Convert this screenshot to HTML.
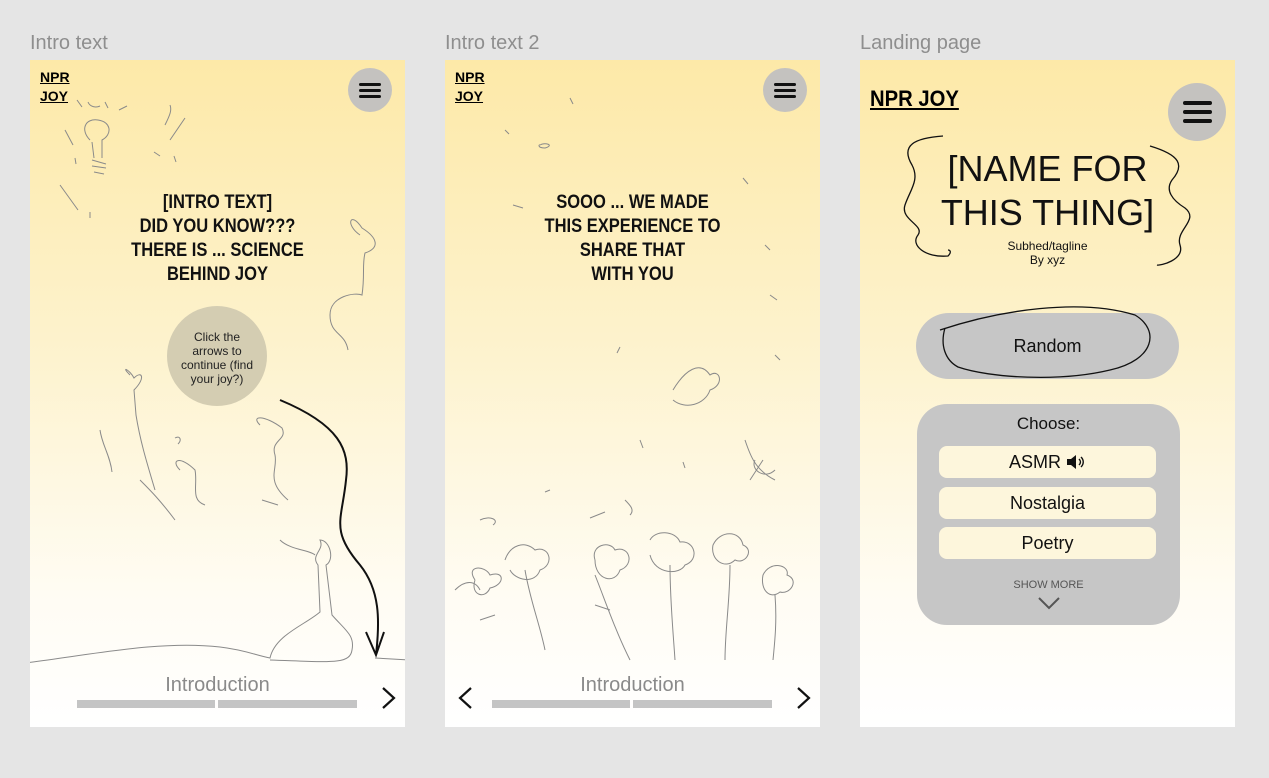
<!DOCTYPE html>
<html><head><meta charset="utf-8"><style>
*{margin:0;padding:0;box-sizing:border-box}
body{width:1269px;height:778px;background:#e5e5e5;position:relative;overflow:hidden;font-family:"Liberation Sans",sans-serif}
.lbl{position:absolute;top:32px;font-size:20px;color:#8e8e8e}
.fr{position:absolute;top:60px;width:375px;height:667px;background:linear-gradient(#fde9a8 0%,#fdf3cf 45%,#fffcf3 80%,#fff 100%);overflow:hidden}
.a{position:absolute}
.nar{font-family:"Liberation Sans Narrow","Liberation Sans",sans-serif;font-weight:bold}
.menu{position:absolute;border-radius:50%;background:#c4c2bf}
.menu i{position:absolute;left:25%;width:50%;background:#111;border-radius:2px}
.ct{position:absolute;text-align:center;width:100%;font-size:19px;line-height:24px;color:#111;transform:scaleX(.87);transform-origin:center}
.intro{position:absolute;top:614px;width:100%;text-align:center;font-size:20px;color:#8a8a8a}
.bar{position:absolute;top:640px;height:8px;background:#c4c4c4}
.btn{position:absolute;left:79px;width:217px;height:32px;background:#fdf6dc;border-radius:8px;text-align:center;font-size:18px;line-height:32px;color:#111}
</style></head><body>
<div class="lbl" style="left:30px">Intro text</div>
<div class="lbl" style="left:445px">Intro text 2</div>
<div class="lbl" style="left:860px">Landing page</div>

<!-- Frame 1 -->
<div class="fr" style="left:30px">
 <div class="a nar" style="left:10px;top:8px;font-size:14px;line-height:19px;text-decoration:underline">NPR<br>JOY</div>
 <div class="menu" style="left:318px;top:8px;width:44px;height:44px"><i style="top:15px;height:3px"></i><i style="top:21px;height:3px"></i><i style="top:27px;height:3px"></i></div>
 <svg class="a" style="left:0;top:0" width="375" height="667" fill="none" stroke="#8a8a8a" stroke-width="1">
  <path d="M60 80 C50 70 55 58 68 60 C82 62 82 75 72 80 L72 98 M62 82 L64 98 M62 100 L76 104 M62 106 L76 108 M64 112 L74 114"/>
  <path d="M47 40 L52 47 M58 42 C60 47 66 48 70 46 M75 42 L78 48 M89 50 L97 46 M135 65 C140 55 142 50 140 45 M140 80 L155 58 M124 92 L130 96 M144 96 L146 102 M35 70 L43 85 M45 98 L46 104 M30 125 L48 150 M60 152 L60 158"/>
  <path d="M330 175 C315 165 320 150 332 168 C348 178 350 188 335 193 C332 205 335 215 332 235 C325 232 300 236 300 255 C300 275 315 272 318 290"/>
  <path d="M100 315 C90 305 100 310 104 318 C112 310 116 318 104 330 L106 355 C110 380 116 400 125 430 M70 370 C72 385 80 395 82 412 M145 378 C150 375 152 380 148 384 M110 420 C120 430 130 440 145 460"/>
  <path d="M150 410 C140 400 150 395 165 410 C168 425 160 440 175 445 M230 365 C220 355 235 355 252 368 C258 380 240 380 245 395 C248 410 235 420 258 440 M232 440 L248 445 M250 480 C260 490 280 490 285 495"/>
  <path d="M-5 603 C60 595 130 580 190 587 C215 590 225 595 240 598 C245 575 275 565 290 552 L288 505 C280 495 295 490 290 480 C300 480 305 500 296 505 L302 555 C315 570 325 575 322 590 C320 605 300 602 240 600 M345 598 L380 600"/>
 </svg>
 <svg class="a" style="left:0;top:0" width="375" height="667" fill="none" stroke="#111" stroke-width="2">
  <path d="M250 340 C310 365 320 390 316 420 C312 460 300 470 330 505 C350 530 350 560 346 595 M336 572 L346 595 L354 572"/>
 </svg>
 <div class="ct nar" style="top:131px">[INTRO TEXT]<br>DID YOU KNOW???<br>THERE IS ... SCIENCE<br>BEHIND JOY</div>
 <div class="a" style="left:137px;top:246px;width:100px;height:100px;border-radius:50%;background:#d4cdb2;text-align:center;font-size:12px;line-height:14px;padding-top:24px;color:#222">Click the<br>arrows to<br>continue (find<br>your joy?)</div>
 <div class="intro">Introduction</div>
 <div class="bar" style="left:47px;width:138px"></div><div class="bar" style="left:188px;width:139px"></div>
 <svg class="a" style="left:350px;top:626px" width="18" height="24" fill="none" stroke="#111" stroke-width="2.2"><path d="M3 2 L14 12 L3 22"/></svg>
</div>

<!-- Frame 2 -->
<div class="fr" style="left:445px">
 <div class="a nar" style="left:10px;top:8px;font-size:14px;line-height:19px;text-decoration:underline">NPR<br>JOY</div>
 <div class="menu" style="left:318px;top:8px;width:44px;height:44px"><i style="top:15px;height:3px"></i><i style="top:21px;height:3px"></i><i style="top:27px;height:3px"></i></div>
 <svg class="a" style="left:0;top:0" width="375" height="667" fill="none" stroke="#8a8a8a" stroke-width="1">
  <path d="M125 38 L128 44 M60 70 L64 74 M95 85 C100 82 110 85 100 88 C92 88 94 84 95 85 M298 118 L303 124 M68 145 L78 148 M320 185 L325 190 M325 235 L332 240 M330 295 L335 300 M175 287 L172 293 M195 380 L198 388 M100 432 L105 430 M238 402 L240 408"/>
  <path d="M228 330 C240 310 255 300 265 315 C275 308 280 325 265 330 C260 345 240 350 228 340 M300 380 C305 395 310 410 330 420 M305 420 L318 400 M310 400 C305 410 320 420 330 410"/>
  <path d="M35 460 C45 455 55 460 48 465 M180 440 C185 445 190 450 185 455 M145 458 L160 452"/>
  <path d="M30 520 C20 505 40 505 45 515 C60 510 60 525 45 528 C40 540 25 535 30 520 M60 500 C65 485 80 480 90 490 C105 485 110 505 95 510 C90 525 70 520 65 510 M80 510 C85 540 95 565 100 590"/>
  <path d="M150 500 C145 485 165 480 170 490 C185 485 190 505 175 510 C170 525 150 520 150 500 M150 515 C160 540 170 570 185 600 M205 480 C210 470 230 470 235 482 C250 480 255 500 240 505 C235 515 210 515 205 495 M225 505 C225 540 228 570 230 600"/>
  <path d="M268 485 C275 470 295 470 298 485 C310 490 300 505 290 500 C280 510 265 500 268 485 M285 505 C285 540 280 570 280 600 M318 515 C325 500 345 505 342 515 C355 520 345 535 335 532 C325 540 315 530 318 515 M330 535 C332 560 330 580 328 600 M10 530 C20 520 30 520 35 530 M150 545 L165 550 M35 560 L50 555"/>
 </svg>
 <div class="ct nar" style="top:131px">SOOO ... WE MADE<br>THIS EXPERIENCE TO<br>SHARE THAT<br>WITH YOU</div>
 <div class="intro">Introduction</div>
 <div class="bar" style="left:47px;width:138px"></div><div class="bar" style="left:188px;width:139px"></div>
 <svg class="a" style="left:12px;top:626px" width="18" height="24" fill="none" stroke="#111" stroke-width="2.2"><path d="M14 2 L3 12 L14 22"/></svg>
 <svg class="a" style="left:350px;top:626px" width="18" height="24" fill="none" stroke="#111" stroke-width="2.2"><path d="M3 2 L14 12 L3 22"/></svg>
</div>

<!-- Frame 3 -->
<div class="fr" style="left:860px">
 <div class="a nar" style="left:10px;top:26px;font-size:22px;text-decoration:underline;transform:scaleX(.92);transform-origin:left">NPR JOY</div>
 <div class="menu" style="left:308px;top:23px;width:58px;height:58px"><i style="top:18px;height:4px"></i><i style="top:27px;height:4px"></i><i style="top:36px;height:4px"></i></div>
 <svg class="a" style="left:0;top:0" width="375" height="667" fill="none" stroke="#111" stroke-width="1.3">
  <path d="M83 76 C55 78 40 85 52 105 C60 120 50 130 45 145 C40 160 65 165 58 175 C50 185 65 198 88 196 C92 192 90 190 88 190"/>
  <path d="M290 86 C320 95 325 105 312 120 C305 130 312 140 325 148 C340 160 315 170 320 185 C325 200 300 206 297 205"/>
 </svg>
 <div class="a" style="left:0;top:87px;width:375px;text-align:center;font-size:36px;line-height:44px;color:#111">[NAME FOR<br>THIS THING]</div>
 <div class="a" style="left:0;top:179px;width:375px;text-align:center;font-size:12px;line-height:14px;color:#111">Subhed/tagline<br>By xyz</div>
 <div class="a" style="left:56px;top:253px;width:263px;height:66px;border-radius:33px;background:#c6c6c6;text-align:center;font-size:18px;line-height:66px;color:#111">Random</div>
 <svg class="a" style="left:0;top:0" width="375" height="667" fill="none" stroke="#111" stroke-width="1.3"><path d="M80 270 C140 250 220 238 275 255 C300 270 295 300 250 310 C200 322 130 318 98 307 C85 300 80 285 85 268"/></svg>
 <div class="a" style="left:57px;top:344px;width:263px;height:221px;border-radius:30px;background:#c6c6c6">
  <div class="a" style="left:0;top:10px;width:263px;text-align:center;font-size:17px;color:#111">Choose:</div>
  <div class="btn" style="left:22px;top:42px">ASMR <svg width="20" height="16" style="vertical-align:-2px" viewBox="0 0 20 16"><path d="M1 5 H5 L10 1 V15 L5 11 H1Z" fill="#111"/><path d="M13 5 C15 7 15 9 13 11 M15 3 C18 6 18 10 15 13" stroke="#111" stroke-width="1.4" fill="none"/></svg></div>
  <div class="btn" style="left:22px;top:83px">Nostalgia</div>
  <div class="btn" style="left:22px;top:123px">Poetry</div>
  <div class="a" style="left:0;top:175px;width:263px;text-align:center;font-size:11px;color:#555">SHOW MORE</div>
  <svg class="a" style="left:121px;top:193px" width="22" height="13" fill="none" stroke="#555" stroke-width="2"><path d="M1 1 L11 11 L21 1"/></svg>
 </div>
</div>
</body></html>
